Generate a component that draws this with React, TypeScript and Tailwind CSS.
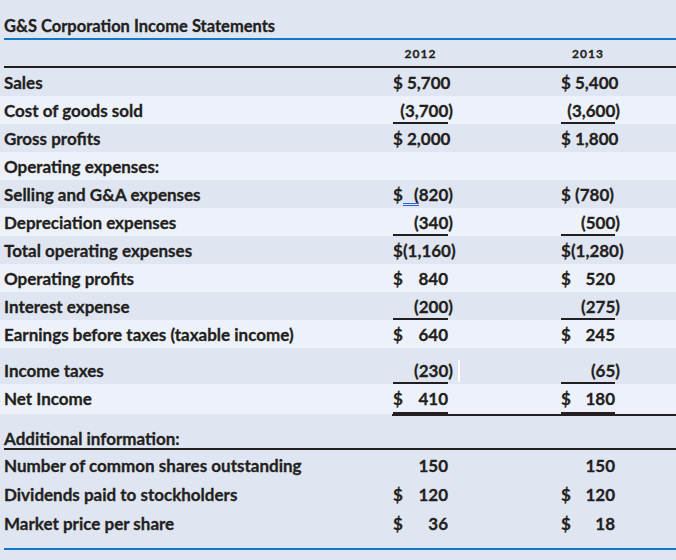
import React from "react";

type Cell = {
  d?: boolean; // dollar sign
  v: string;
  p?: boolean; // parentheses
  u?: boolean; // underline
  raw?: boolean;
};

type Row = {
  label: string;
  light?: boolean;
  h?: string;
  a?: Cell;
  b?: Cell;
  mark?: boolean;
  cursor?: boolean;
};

const rows: Row[] = [
  { label: "Sales", a: { raw: true, v: "$ 5,700" }, b: { raw: true, v: "$ 5,400" } },
  { label: "Cost of goods sold", light: true, a: { v: "3,700", p: true, u: true }, b: { v: "3,600", p: true, u: true } },
  { label: "Gross profits", a: { raw: true, v: "$ 2,000" }, b: { raw: true, v: "$ 1,800" } },
  { label: "Operating expenses:", light: true },
  { label: "Selling and G&A expenses", a: { d: true, v: "820", p: true }, b: { raw: true, v: "$ (780)" }, mark: true },
  { label: "Depreciation expenses", light: true, a: { v: "340", p: true, u: true }, b: { v: "500", p: true, u: true } },
  { label: "Total operating expenses", a: { d: true, v: "1,160", p: true }, b: { d: true, v: "1,280", p: true } },
  { label: "Operating profits", light: true, a: { d: true, v: "840" }, b: { d: true, v: "520" } },
  { label: "Interest expense", a: { v: "200", p: true, u: true }, b: { v: "275", p: true, u: true } },
  { label: "Earnings before taxes (taxable income)", light: true, a: { d: true, v: "640" }, b: { d: true, v: "245" } },
  { label: "Income taxes", h: "h-[36px] pt-[14px]", a: { v: "230", p: true, u: true }, b: { v: "65", p: true, u: true }, cursor: true },
  { label: "Net Income", light: true, h: "h-[30px] pt-[6px]", a: { d: true, v: "410", u: true }, b: { d: true, v: "180", u: true } },
];

const extra = [
  { label: "Number of common shares outstanding", a: { v: "150" }, b: { v: "150" }, h: "h-[29px]" },
  { label: "Dividends paid to stockholders", a: { d: true, v: "120" }, b: { d: true, v: "120" }, h: "h-[29px]" },
  { label: "Market price per share", a: { d: true, v: "36" }, b: { d: true, v: "18" }, h: "h-[28px]" },
];

function Val({ c, w }: { c?: Cell; w: string }) {
  if (!c) return <div className={`${w} shrink-0`} />;
  const border = c.u ? "border-[#231f20]" : "border-transparent";
  if (c.raw) {
    return (
      <div className={`${w} shrink-0 whitespace-pre border-b-2 ${border} leading-[18px]`}>{c.v}</div>
    );
  }
  return (
    <div className={`${w} shrink-0 flex justify-between border-b-2 ${border} leading-[18px]`}>
      <span>{c.d ? "$" : ""}</span>
      <span className={c.p ? "-mr-[5px]" : ""}>{c.p ? `(${c.v})` : c.v}</span>
    </div>
  );
}

export default function App() {
  return (
    <div className="w-[676px] h-[560px] overflow-hidden bg-[#dfe6f2] font-['Lato',sans-serif] font-bold text-[#231f20] [-webkit-text-stroke:0.3px_#231f20]">
      {/* title */}
      <div className="ml-[4px] h-[40px] border-b-2 border-[#0f7acb] pt-[17px] text-[16.5px] leading-[18px]">
        G&amp;S Corporation Income Statements
      </div>

      {/* years */}
      <div className="ml-[4px] flex h-[28px] border-b-2 border-[#231f20] pt-[7px] text-[12px] leading-[14px] tracking-[1px]">
        <div className="w-[389px] shrink-0" />
        <div className="w-[55px] shrink-0 text-center">2012</div>
        <div className="w-[113px] shrink-0" />
        <div className="w-[54px] shrink-0 text-center">2013</div>
      </div>

      {/* statement rows */}
      <div className="text-[17px]">
        {rows.map((r) => (
          <div
            key={r.label}
            className={`relative flex pl-[4px] ${r.h ?? "h-[28px] pt-[6px]"} ${r.light ? "bg-[#edf2fa]" : "bg-[#dfe6f2]"}`}
          >
            <div className="w-[389px] shrink-0 leading-[18px]">{r.label}</div>
            <Val c={r.a} w="w-[55px]" />
            <div className="w-[113px] shrink-0" />
            <Val c={r.b} w="w-[54px]" />
            {r.mark && (
              <span className="absolute left-[403px] top-[23px] h-[3px] w-[16px] border-y border-[#2a62d8]" />
            )}
            {r.cursor && <span className="absolute left-[458px] top-[12px] h-[22px] w-[2px] bg-white" />}
          </div>
        ))}
        <div className="ml-[392px] h-[2px] bg-[#231f20]" />

        {/* additional information */}
        <div className="ml-[4px] h-[34px] border-b-2 border-[#231f20] pt-[14px] leading-[18px]">
          Additional information:
        </div>
        {extra.map((r) => (
          <div key={r.label} className={`flex pl-[4px] pt-[7px] ${r.h}`}>
            <div className="w-[389px] shrink-0 leading-[18px]">{r.label}</div>
            <Val c={r.a} w="w-[55px]" />
            <div className="w-[113px] shrink-0" />
            <Val c={r.b} w="w-[54px]" />
          </div>
        ))}
        <div className="h-[12px]" />
        <div className="ml-[4px] h-[2px] bg-[#0f7acb]" />
      </div>
    </div>
  );
}
